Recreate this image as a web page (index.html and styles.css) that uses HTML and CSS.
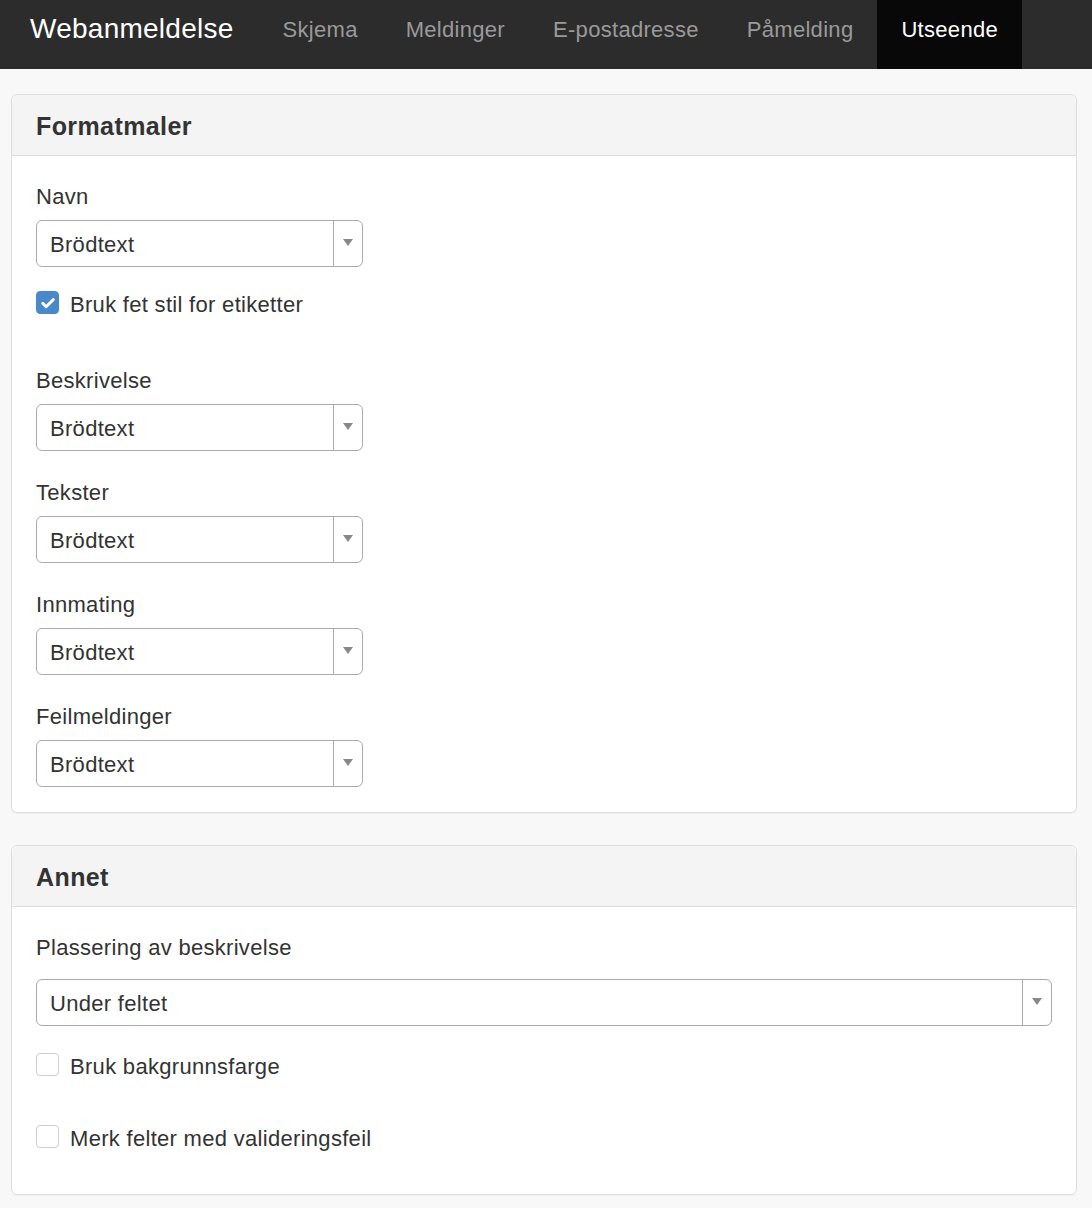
FILE: index.html
```html
<!DOCTYPE html>
<html lang="no">
<head>
<meta charset="utf-8">
<title>Webanmeldelse</title>
<link rel="stylesheet" href="styles.css">
</head>
<body>
<nav class="navbar">
  <span class="brand">Webanmeldelse</span>
  <ul class="nav">
    <li><a href="#">Skjema</a></li>
    <li><a href="#">Meldinger</a></li>
    <li><a href="#">E-postadresse</a></li>
    <li><a href="#">Påmelding</a></li>
    <li class="active"><a href="#">Utseende</a></li>
  </ul>
</nav>
<main class="content">
  <section class="panel">
    <div class="panel-heading"><h3 class="panel-title">Formatmaler</h3></div>
    <div class="panel-body">
      <div class="group">
        <label class="label">Navn</label>
        <div class="select narrow"><span class="value">Brödtext</span><span class="arrow"></span></div>
        <div class="check first-check"><span class="box checked"><svg viewBox="0 0 24 24" width="18" height="18"><path d="M5 12.5l4.5 4.5L19 7.5" fill="none" stroke="#fff" stroke-width="3.8" stroke-linecap="round" stroke-linejoin="round"/></svg></span><span class="check-text">Bruk fet stil for etiketter</span></div>
      </div>
      <div class="group after-check">
        <label class="label">Beskrivelse</label>
        <div class="select narrow"><span class="value">Brödtext</span><span class="arrow"></span></div>
      </div>
      <div class="group">
        <label class="label">Tekster</label>
        <div class="select narrow"><span class="value">Brödtext</span><span class="arrow"></span></div>
      </div>
      <div class="group">
        <label class="label">Innmating</label>
        <div class="select narrow"><span class="value">Brödtext</span><span class="arrow"></span></div>
      </div>
      <div class="group">
        <label class="label">Feilmeldinger</label>
        <div class="select narrow"><span class="value">Brödtext</span><span class="arrow"></span></div>
      </div>
    </div>
  </section>
  <section class="panel second">
    <div class="panel-heading"><h3 class="panel-title">Annet</h3></div>
    <div class="panel-body body-two">
      <label class="label label-wide">Plassering av beskrivelse</label>
      <div class="select"><span class="value">Under feltet</span><span class="arrow"></span></div>
      <div class="check check-a"><span class="box"></span><span class="check-text">Bruk bakgrunnsfarge</span></div>
      <div class="check check-b"><span class="box"></span><span class="check-text">Merk felter med valideringsfeil</span></div>
    </div>
  </section>
</main>
</body>
</html>
```
FILE: styles.css
```css
* { box-sizing: border-box; }
html, body { margin: 0; padding: 0; }
body {
  background: #f8f8f8;
  font-family: "Liberation Sans", Arial, sans-serif;
  color: #333;
  font-size: 22px;
  letter-spacing: 0.3px;
}
.navbar {
  display: flex;
  align-items: stretch;
  height: 69px;
  background: #2c2c2c;
  padding-left: 30px;
}
.brand {
  color: #fff;
  font-size: 28px;
  line-height: 30px;
  padding-top: 14px;
  margin-right: 25px;
  letter-spacing: 0.25px;
}
.nav {
  display: flex;
  list-style: none;
  margin: 0;
  padding: 0;
}
.nav li { display: flex; }
.nav a {
  display: block;
  color: #9a9a9a;
  text-decoration: none;
  font-size: 22px;
  line-height: 30px;
  padding: 15px 24px 0;
  letter-spacing: 0.3px;
}
.nav li.active { background: #080808; }
.nav li.active a { color: #fff; }

.content {
  padding: 25px 15px 20px 11px;
}
.panel {
  background: #fff;
  border: 1px solid #dedede;
  border-radius: 6px;
  box-shadow: 0 1px 1px rgba(0,0,0,0.04);
}
.panel.second { margin-top: 32px; }
.panel-heading {
  background: #f4f4f4;
  border-bottom: 1px solid #dedede;
  border-radius: 6px 6px 0 0;
  height: 61px;
  padding: 0 24px;
  display: flex;
  align-items: center;
}
.panel-title {
  margin: 0;
  font-size: 25px;
  font-weight: bold;
  color: #333;
  line-height: 30px;
  padding-top: 1px;
  letter-spacing: 0.4px;
}
.panel-body {
  padding: 26px 24px 25px;
}
.group + .group { margin-top: 27px; }
.group.after-check { margin-top: 46px; }
.label {
  display: block;
  line-height: 30px;
  margin-bottom: 8px;
}
.label-wide { margin-bottom: 16px; }
.select {
  display: flex;
  height: 47px;
  border: 1px solid #aaa;
  border-radius: 6px;
  background: #fff;
}
.select.narrow { width: 327px; }
.select .value {
  flex: 1;
  padding-left: 13px;
  line-height: 47px;
  color: #333;
}
.select .arrow {
  width: 29px;
  border-left: 1px solid #aaa;
  display: flex;
  align-items: center;
  justify-content: center;
}
.select .arrow::after {
  content: "";
  width: 0;
  height: 0;
  border-left: 5px solid transparent;
  border-right: 5px solid transparent;
  border-top: 7px solid #888;
  margin-top: -2px;
}
.check {
  display: flex;
  align-items: center;
  line-height: 30px;
}
.first-check { margin-top: 23px; }
.box {
  width: 23px;
  height: 23px;
  border: 1px solid #cfcfcf;
  border-radius: 4px;
  background: #fff;
  margin-right: 11px;
  margin-bottom: 5px;
  display: flex;
  align-items: center;
  justify-content: center;
  flex: none;
}
.box.checked {
  background: #4a89c8;
  border-color: #4a89c8;
}
.check-text { color: #333; }
.check-a { margin-top: 26px; }
.check-b { margin-top: 42px; }
.body-two { padding-bottom: 40px; }
```
